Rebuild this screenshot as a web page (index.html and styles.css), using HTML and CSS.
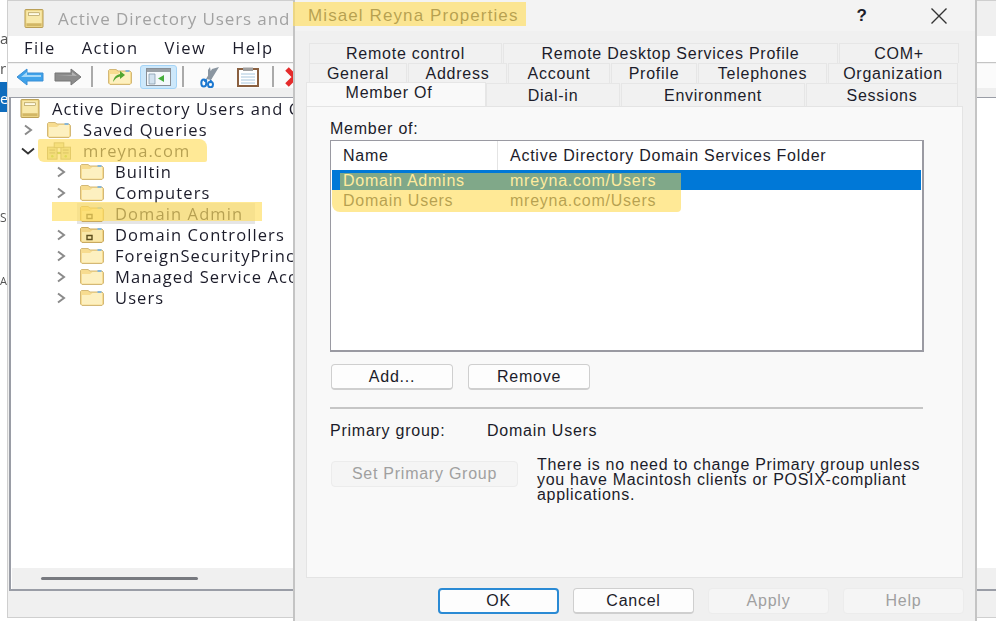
FILE: index.html
```html
<!DOCTYPE html>
<html lang="en">
<head>
  <meta charset="UTF-8" />
  <title>Misael Reyna Properties</title>
  <link rel="stylesheet" href="styles.css">
</head>
<body>
  <svg class="defs" width="0" height="0">
    <symbol id="folder" viewBox="0 0 24 16">
      <path d="M.5 3V1.500L1.500.5H8l2 1.500h12l1.500 1.500V14l-1.500 1.500H2L.5 14z" fill="#f7dc90" stroke="#d3b877"/>
      <path d="M2 5h8l2.500-2H22v11.500H2z" fill="#fdf0c0"/>
      <path d="M17.500 1h4v2h-4z" fill="#86b6d8"/>
    </symbol>
    <symbol id="folder-ou" viewBox="0 0 24 16">
      <path d="M.5 3V1.500L1.500.5H8l2 1.500h12l1.500 1.500V14l-1.500 1.500H2L.5 14z" fill="#f0d384" stroke="#c8a95f"/>
      <path d="M2 5h8l2.500-2H22v11.500H2z" fill="#f9e7a8"/>
      <path d="M17.500 1h4v2h-4z" fill="#86b6d8"/>
      <path d="M7 8.500h5v4H7z" fill="none" stroke="#5d4e1c" stroke-width="1.400"/>
    </symbol>
    <symbol id="root" viewBox="0 0 20 20">
      <rect x=".5" y=".5" width="19" height="19" rx="1" fill="#ecd584" stroke="#b59a50"/>
      <rect x="2" y="2" width="16" height="16" fill="#f8e9ab"/>
      <rect x="4" y="4" width="12" height="3" fill="#fffbe6" stroke="#a08840" stroke-width=".6"/>
      <rect x="2" y="15" width="16" height="3" fill="#d2b765"/>
    </symbol>
    <symbol id="domain" viewBox="0 0 25 18">
      <rect x=".5" y="5" width="10" height="12.500" fill="#dcdca8" stroke="#a8a070"/>
      <rect x="14.500" y="5" width="10" height="12.500" fill="#dcdca8" stroke="#a8a070"/>
      <rect x="7.500" y=".5" width="10" height="5" fill="#e4dfa8" stroke="#a8a070"/>
      <path d="M2.500 8h6M2.500 11h6M16.500 8h6M16.500 11h6" stroke="#8f8a60"/>
      <path d="M10.500 11h4" stroke="#8f8a60" stroke-width="2"/>
      <circle cx="5.500" cy="14.500" r="1.300" fill="#9acb3c"/>
      <circle cx="19.500" cy="14.500" r="1.300" fill="#9acb3c"/>
      <circle cx="12.500" cy="11" r="1.300" fill="#9acb3c"/>
    </symbol>
    <symbol id="chev" viewBox="0 0 10 12">
      <path d="M2 1.500 8 6l-6 4.500" fill="none" stroke="#8a8a8a" stroke-width="2"/>
    </symbol>
  </svg>

  <div class="desk-a">a</div>
  <div class="desk-r">r</div>
  <div class="desk-blue">e</div>
  <div class="desk-s">S</div>
  <div class="desk-cap">A</div>

  <div class="snapin">
    <div class="win-title">
      <svg class="win-icon"><use href="#root"/></svg>
      <span>Active Directory Users and Computers</span>
    </div>
    <div class="menu">
      <span>File</span>
      <span>Action</span>
      <span>View</span>
      <span>Help</span>
    </div>
    <div class="toolbar">
      <svg class="tb-arrow" viewBox="0 0 28 18"><path d="M1 9 11 1v4h16v8H11v4z" fill="#3fa2ea" stroke="#3a8fd6"/><path d="M5 9 11 4v3h14v2z" fill="#a5d8f8"/></svg>
      <svg class="tb-arrow tb-next" viewBox="0 0 28 18"><path d="M27 9 17 1v4H1v8h16v4z" fill="#8c8c8c" stroke="#777"/><path d="M3 7h15V4l5 4z" fill="#b4b4b4"/></svg>
      <i class="tb-sep tb-sep1"></i>
      <svg class="tb-up" viewBox="0 0 24 16"><use href="#folder"/><path d="M5 13c1-5 3-7 7-8V2l5 4-5 4V7.500c-3 .5-5 2.500-7 5.500z" fill="#52a530"/></svg>
      <span class="tb-active">
        <svg width="25" height="18" viewBox="0 0 25 18"><rect x=".5" y=".5" width="24" height="17" fill="#f4f8fb" stroke="#8a8f96"/><path d="M1 1h23v3H1z" fill="#9aa0a6"/><path d="M3 6h6v10H3z" fill="#d3e2ef" stroke="#7d94a8" stroke-width=".7"/><path d="M18 7v7l-6-3.500z" fill="#46ad3c"/></svg>
      </span>
      <i class="tb-sep tb-sep2"></i>
      <svg class="tb-cut" viewBox="0 0 20 22"><path d="M6 13 12 3 19 1 11 14zM8 12 8 4 10 1 12 13z" fill="#8b96a1"/><path d="M7 14 4 15M11 14 10 17" stroke="#1c78d0" stroke-width="2"/><ellipse cx="3.800" cy="17" rx="2.500" ry="3.500" fill="none" stroke="#1c78d0" stroke-width="2"/><ellipse cx="10.500" cy="18.500" rx="2.500" ry="2.800" fill="none" stroke="#1c78d0" stroke-width="2"/></svg>
      <svg class="tb-clip" viewBox="0 0 22 20"><rect x="1" y="2" width="20" height="17" fill="#fff" stroke="#8a6040" stroke-width="2"/><path d="M6 .5h10V4H6z" fill="#a0a0a0"/><path d="M4 7h14M4 10h14M4 13h14M4 16h14" stroke="#a8c6dd"/></svg>
      <i class="tb-sep tb-sep3"></i>
      <svg class="tb-x" viewBox="0 0 20 20"><path d="M2 2 18 18M18 2 2 18" stroke="#e52b2b" stroke-width="5"/></svg>
    </div>
    <div class="tree">
      <div class="tree-rows">
        <div class="row"><svg class="i-root"><use href="#root"/></svg><span>Active Directory Users and Computers</span></div>
        <div class="row lv1"><svg class="chev"><use href="#chev"/></svg><svg class="i-folder"><use href="#folder"/></svg><span>Saved Queries</span></div>
        <div class="row lv1"><svg class="chev-open" viewBox="0 0 14 8"><path d="M1 1.500 7 6.500l6-5" fill="none" stroke="#333" stroke-width="1.800"/></svg><svg class="i-folder i-domain"><use href="#domain"/></svg><span>mreyna.com</span></div>
        <div class="row lv2"><svg class="chev"><use href="#chev"/></svg><svg class="i-folder"><use href="#folder"/></svg><span>Builtin</span></div>
        <div class="row lv2"><svg class="chev"><use href="#chev"/></svg><svg class="i-folder"><use href="#folder"/></svg><span>Computers</span></div>
        <div class="row lv2"><i class="chev"></i><div class="row-sel"><svg class="i-folder"><use href="#folder-ou"/></svg><span>Domain Admin</span></div></div>
        <div class="row lv2"><svg class="chev"><use href="#chev"/></svg><svg class="i-folder"><use href="#folder-ou"/></svg><span>Domain Controllers</span></div>
        <div class="row lv2"><svg class="chev"><use href="#chev"/></svg><svg class="i-folder"><use href="#folder"/></svg><span>ForeignSecurityPrincipals</span></div>
        <div class="row lv2"><svg class="chev"><use href="#chev"/></svg><svg class="i-folder"><use href="#folder"/></svg><span>Managed Service Accounts</span></div>
        <div class="row lv2"><svg class="chev"><use href="#chev"/></svg><svg class="i-folder"><use href="#folder"/></svg><span>Users</span></div>
      </div>
      <div class="hscroll"><i class="thumb"></i></div>
    </div>
    <div class="status"></div>
  </div>

  <div class="hl hl-domain"></div>
  <div class="hl hl-ou"></div>

  <div class="dialog">
    <div class="dlg-title">
      <span class="dlg-name">Misael Reyna Properties</span>
      <span class="dlg-help">?</span>
      <svg class="dlg-close" viewBox="0 0 18 18"><path d="M1.500 1.500 16.500 16.500M16.500 1.500 1.500 16.500" stroke="#333" stroke-width="1.400"/></svg>
    </div>
    <div class="tabs">
      <div class="tab-row">
        <div class="tab t-192">Remote control</div>
        <div class="tab t-334">Remote Desktop Services Profile</div>
        <div class="tab t-120">COM+</div>
      </div>
      <div class="tab-row">
        <div class="tab t-97">General</div>
        <div class="tab t-98">Address</div>
        <div class="tab t-102">Account</div>
        <div class="tab t-85">Profile</div>
        <div class="tab t-128">Telephones</div>
        <div class="tab t-130">Organization</div>
      </div>
      <div class="tab-row last">
        <div class="tab tab-on">Member Of</div>
        <div class="tab t-134">Dial-in</div>
        <div class="tab t-183">Environment</div>
        <div class="tab t-152">Sessions</div>
      </div>
    </div>
    <div class="panel">
      <div class="lbl-member">Member of:</div>
      <div class="listbox">
        <div class="list-head">
          <div class="col-name">Name</div>
          <div class="col-path">Active Directory Domain Services Folder</div>
        </div>
        <div class="list-row selected"><div class="col-name">Domain Admins</div><div class="col-path">mreyna.com/Users</div></div>
        <div class="list-row"><div class="col-name">Domain Users</div><div class="col-path">mreyna.com/Users</div></div>
      </div>
      <div class="btn-row">
        <button class="btn">Add...</button>
        <button class="btn">Remove</button>
      </div>
      <hr class="sep">
      <div class="primary"><span class="primary-lbl">Primary group:</span><span>Domain Users</span></div>
      <div class="set-row">
        <button class="btn btn-set" disabled>Set Primary Group</button>
        <p class="note">There is no need to change Primary group unless<br>you have Macintosh clients or POSIX-compliant<br>applications.</p>
      </div>
    </div>
    <div class="dlg-foot">
      <button class="btn btn-ok">OK</button>
      <button class="btn">Cancel</button>
      <button class="btn" disabled>Apply</button>
      <button class="btn" disabled>Help</button>
    </div>
  </div>

  <div class="hl hl-title"></div>
  <div class="hl hl-row1"></div>
  <div class="hl hl-row2"></div>
</body>
</html>
```

FILE: styles.css
```css
html, body {
  margin: 0;
  height: 100%;
}

body {
  width: 996px;
  height: 621px;
  position: relative;
  overflow: hidden;
  background: #fff;
  font-family: "Open Sans", "Liberation Sans", sans-serif;
  color: #1c1c2a;
  filter: blur(0.45px);
}

.defs {
  position: absolute;
}

/* bits of the desktop behind the windows */
.desk-a, .desk-r, .desk-blue, .desk-s, .desk-cap {
  position: absolute;
  left: 0;
  width: 7px;
  overflow: hidden;
  font-size: 15px;
  line-height: 20px;
  color: #555;
}
.desk-a { top: 28px; }
.desk-r { top: 58px; }
.desk-blue { top: 82px; height: 30px; padding-top: 6px; box-sizing: border-box; background: #0f6cbd; color: #fff; }
.desk-s { top: 208px; font-size: 12px; }
.desk-cap { top: 271px; font-size: 11px; }

/* window behind the dialog */
.snapin {
  position: absolute;
  left: 7px;
  top: 0;
  width: 989px;
  height: 618px;
  box-sizing: border-box;
  border: 1px solid #cfcfcf;
  border-right: 0;
  background: #f0f0f0;
  display: flex;
  flex-direction: column;
  font-size: 16.5px;
  letter-spacing: 1.1px;
}

.win-title {
  height: 35px;
  box-sizing: border-box;
  padding-bottom: 1px;
  display: flex;
  align-items: center;
  padding-left: 16px;
  gap: 14px;
  font-size: 17px;
  letter-spacing: 0.9px;
  color: #a2a2a2;
  white-space: nowrap;
}
.win-icon {
  width: 20px;
  height: 19px;
}

.menu {
  height: 27px;
  box-sizing: border-box;
  padding-bottom: 3px;
  background: #fff;
  display: flex;
  align-items: center;
  padding-left: 16px;
  gap: 26px;
  border-bottom: 1px solid #c4c4c4;
  letter-spacing: 1.4px;
}

.toolbar {
  height: 25px;
  margin-top: 1px;
  padding-bottom: 8px;
  background: linear-gradient(#fbfbfb 24px, #efefef 24px);
  display: flex;
  align-items: center;
  padding-left: 8px;
}
.tb-arrow { width: 28px; height: 18px; }
.tb-next { margin-left: 10px; }
.tb-sep { width: 2px; height: 21px; background: #aaa; }
.tb-sep1 { margin-left: 9px; }
.tb-up { width: 24px; height: 16px; margin-left: 15px; }
.tb-active {
  margin-left: 8px;
  width: 37px;
  height: 24px;
  box-sizing: border-box;
  border: 1px solid #a5d4f7;
  border-radius: 3px;
  background: #cde8fb;
  display: flex;
  align-items: center;
  justify-content: center;
}
.tb-sep2 { margin-left: 5px; }
.tb-cut { width: 20px; height: 22px; margin-left: 16px; }
.tb-clip { width: 22px; height: 20px; margin-left: 17px; }
.tb-sep3 { margin-left: 13px; }
.tb-x { width: 20px; height: 20px; margin-left: 11px; }

.tree {
  flex: 1;
  margin-left: 1px;
  background: #fff;
  border: 1px solid #9a9da6;
  border-width: 1px 0 2px 2px;
  display: flex;
  flex-direction: column;
  min-height: 0;
}
.tree-rows {
  flex: 1;
}
.row {
  height: 21px;
  display: flex;
  align-items: center;
  padding-left: 9px;
  white-space: nowrap;
}
.lv1 { padding-left: 12px; }
.lv2 { padding-left: 45px; }
.i-root { width: 20px; height: 19px; margin-right: 12px; }
.chev { width: 10px; height: 12px; margin-right: 14px; flex: none; }
.chev-open { width: 14px; height: 8px; margin: 0 12px 0 -2px; flex: none; }
.i-folder { width: 24px; height: 16px; margin-right: 12px; flex: none; }
.lv2 .i-folder { margin-right: 11px; }
.i-domain { height: 18px; }
.row-sel {
  display: flex;
  align-items: center;
  height: 21px;
  background: #e5e5e5;
  margin-left: -3px;
  padding: 0 12px 0 3px;
}

.hscroll {
  height: 21px;
  margin-left: 1px;
  background: #f0f0f0;
  display: flex;
  align-items: center;
  padding-left: 29px;
}
.thumb {
  width: 157px;
  height: 3px;
  border-radius: 2px;
  background: #77797f;
}
.status {
  height: 26px;
}

/* marker pen over the screenshot */
.hl {
  position: absolute;
  background: rgba(255, 222, 100, 0.68);
}
.hl-domain { left: 38px; top: 139px; width: 169px; height: 23px; border-radius: 2px 8px 2px 6px; }
.hl-ou { left: 52px; top: 202px; width: 210px; height: 19px; }
.hl-title { left: 293px; top: 2px; width: 233px; height: 24px; }
.hl-row1 { left: 340px; top: 173px; width: 341px; height: 17px; background: rgba(255, 215, 60, 0.5); }
.hl-row2 { left: 332px; top: 190px; width: 349px; height: 22px; border-radius: 0 0 4px 8px; }

/* properties dialog */
.dialog {
  position: absolute;
  left: 293px;
  top: 0;
  width: 684px;
  height: 621px;
  box-sizing: border-box;
  border: 1px solid #c4c4c4;
  border-width: 0 2px 0 2px;
  background: #f0f0f0;
  font-size: 16px;
  letter-spacing: 0.75px;
  font-family: "Liberation Sans", Arial, sans-serif;
  display: flex;
  flex-direction: column;
}

.dlg-title {
  height: 31px;
  background: #f3f3f3;
  display: flex;
  align-items: center;
  padding-left: 13px;
  font-size: 17px;
  letter-spacing: 1.1px;
  flex: none;
}
.dlg-name {
  flex: 1;
}
.dlg-help {
  font-size: 17px;
  font-weight: bold;
  margin-right: 62px;
}
.dlg-close {
  width: 18px;
  height: 18px;
  margin-right: 27px;
}

.tabs {
  margin-top: 12px;
  margin-left: 14px;
  width: 650px;
  display: flex;
  flex-direction: column;
  flex: none;
}
.tab-row {
  display: flex;
  gap: 1px;
  height: 20px;
}
.tab-row.last {
  height: 23px;
  margin-left: -3px;
}
.tab {
  background: #f1f1f1;
  border: 1px solid #e6e6e6;
  border-bottom: 0;
  box-sizing: border-box;
  display: flex;
  align-items: center;
  justify-content: center;
}
.t-192 { width: 193px; }
.t-334 { width: 335px; }
.t-120 { width: 120px; }
.t-97 { width: 98px; }
.t-98 { width: 99px; }
.t-102 { width: 102px; }
.t-85 { width: 86px; }
.t-128 { width: 129px; }
.t-130 { width: 130px; }
.t-134 { width: 134px; }
.t-183 { width: 184px; }
.t-152 { width: 152px; }
.tab-row.last .tab {
  padding-top: 2px;
}
.tab-row.last .tab-on {
  width: 180px;
  height: 24px;
  margin-top: -1px;
  margin-right: -1px;
  background: #f9f9f9;
  position: relative;
  align-items: flex-start;
  padding-top: 1px;
  padding-right: 14px;
}

.panel {
  margin-left: 11px;
  width: 657px;
  height: 472px;
  box-sizing: border-box;
  background: #f9f9f9;
  border: 1px solid #e4e4e4;
  padding: 12px 38px 0 23px;
  flex: none;
}
.lbl-member {
  height: 21px;
  box-sizing: border-box;
  padding-top: 1px;
}
.listbox {
  height: 212px;
  box-sizing: border-box;
  background: #fff;
  border: 2px solid #9a9aa2;
  border-width: 1px 2px 2px 1px;
}
.list-head, .list-row {
  display: flex;
  align-items: center;
  height: 20px;
  margin-left: 1px;
  margin-right: 1px;
}
.list-head {
  height: 29px;
}
.col-name {
  width: 166px;
  padding: 1px 0 0 11px;
  box-sizing: border-box;
  flex: none;
  height: 100%;
  display: flex;
  align-items: center;
}
.col-path {
  padding: 1px 0 0 12px;
  box-sizing: border-box;
  height: 100%;
  display: flex;
  align-items: center;
}
.list-head .col-name {
  border-right: 1px solid #e4e4e4;
}
.list-row.selected {
  background: #0078d7;
  color: #fff;
}

.btn-row {
  display: flex;
  gap: 15px;
  margin-top: 12px;
  padding-left: 1px;
}
.btn {
  width: 122px;
  height: 26px;
  padding: 0;
  box-sizing: border-box;
  background: #fdfdfd;
  border: 1px solid #cfcfcf;
  border-bottom-width: 2px;
  border-radius: 4px;
  font: inherit;
  letter-spacing: inherit;
  color: inherit;
}
.btn:disabled {
  background: #f5f5f5;
  border: 1px solid #ececec;
  color: #a0a0a0;
}
.sep {
  margin: 17px 1px 0 0;
  border: 0;
  height: 2px;
  background: #c6c6c6;
}
.primary {
  display: flex;
  margin-top: 12px;
  height: 19px;
  align-items: center;
}
.primary-lbl {
  width: 157px;
}
.set-row {
  display: flex;
  margin-top: 21px;
  padding-left: 1px;
}
.btn-set {
  width: 187px;
  flex: none;
}
.note {
  margin: -4px 0 0 19px;
  line-height: 15px;
  letter-spacing: 0.7px;
  white-space: nowrap;
}

.dlg-foot {
  display: flex;
  gap: 14px;
  padding: 10px 0 0 143px;
}
.dlg-foot .btn {
  width: 121px;
}
.btn-ok {
  border: 2px solid #2a8ad4;
}
```
